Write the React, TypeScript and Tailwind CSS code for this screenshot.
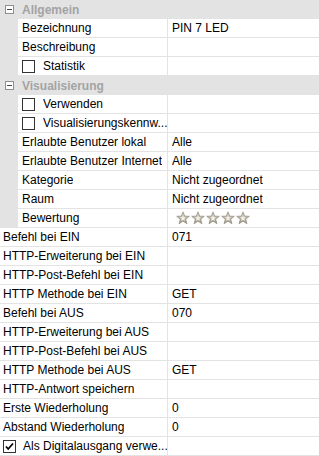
import React from "react";

type Row =
  | { kind: "header"; label: string }
  | { kind: "item"; label: string; value?: string; nested?: boolean; check?: boolean; checked?: boolean; stars?: boolean };

const rows: Row[] = [
  { kind: "header", label: "Allgemein" },
  { kind: "item", nested: true, label: "Bezeichnung", value: "PIN 7 LED" },
  { kind: "item", nested: true, label: "Beschreibung" },
  { kind: "item", nested: true, label: "Statistik", check: true },
  { kind: "header", label: "Visualisierung" },
  { kind: "item", nested: true, label: "Verwenden", check: true },
  { kind: "item", nested: true, label: "Visualisierungskennw...", check: true },
  { kind: "item", nested: true, label: "Erlaubte Benutzer lokal", value: "Alle" },
  { kind: "item", nested: true, label: "Erlaubte Benutzer Internet", value: "Alle" },
  { kind: "item", nested: true, label: "Kategorie", value: "Nicht zugeordnet" },
  { kind: "item", nested: true, label: "Raum", value: "Nicht zugeordnet" },
  { kind: "item", nested: true, label: "Bewertung", stars: true },
  { kind: "item", label: "Befehl bei EIN", value: "071" },
  { kind: "item", label: "HTTP-Erweiterung bei EIN" },
  { kind: "item", label: "HTTP-Post-Befehl bei EIN" },
  { kind: "item", label: "HTTP Methode bei EIN", value: "GET" },
  { kind: "item", label: "Befehl bei AUS", value: "070" },
  { kind: "item", label: "HTTP-Erweiterung bei AUS" },
  { kind: "item", label: "HTTP-Post-Befehl bei AUS" },
  { kind: "item", label: "HTTP Methode bei AUS", value: "GET" },
  { kind: "item", label: "HTTP-Antwort speichern" },
  { kind: "item", label: "Erste Wiederholung", value: "0" },
  { kind: "item", label: "Abstand Wiederholung", value: "0" },
  { kind: "item", label: "Als Digitalausgang verwe...", check: true, checked: true },
];

function MinusBox() {
  return (
    <svg width="9" height="9" viewBox="0 0 9 9" className="block">
      <rect x="0.5" y="0.5" width="8" height="8" fill="#fff" stroke="#8e8f8f" />
      <line x1="2" y1="4.5" x2="7" y2="4.5" stroke="#4a4a4a" />
    </svg>
  );
}

function Check({ checked }: { checked?: boolean }) {
  return (
    <svg width="13" height="13" viewBox="0 0 13 13" className="block shrink-0">
      <rect x="0.5" y="0.5" width="12" height="12" fill="#fff" stroke="#333" />
      {checked && (
        <path d="M3 6.5 L5.2 9 L10 3.5" fill="none" stroke="#000" strokeWidth="1.8" />
      )}
    </svg>
  );
}

function Star() {
  return (
    <svg width="14" height="14" viewBox="0 0 24 23" className="block">
      <defs>
        <linearGradient id="sg" x1="0" y1="0" x2="0" y2="1">
          <stop offset="0" stopColor="#d8d3c7" />
          <stop offset="1" stopColor="#a39c8a" />
        </linearGradient>
      </defs>
      <path
        d="M12 1 L14.9 8.3 L22.8 8.6 L16.6 13.6 L18.8 21.3 L12 16.9 L5.2 21.3 L7.4 13.6 L1.2 8.6 L9.1 8.3 Z"
        fill="url(#sg)"
        stroke="#8f8878"
        strokeWidth="1.2"
      />
      <path
        d="M12 6.5 L13.4 10.2 L17.2 10.4 L14.2 12.8 L15.3 16.5 L12 14.4 L8.7 16.5 L9.8 12.8 L6.8 10.4 L10.6 10.2 Z"
        fill="#f4f2ec"
      />
    </svg>
  );
}

export default function App() {
  return (
    <div
      className="w-[319px] h-[456px] bg-white overflow-hidden text-[12px] text-black"
      style={{ fontFamily: '"Liberation Sans", Arial, sans-serif' }}
    >
      {rows.map((r, i) => {
        if (r.kind === "header") {
          return (
            <div key={i} className="h-[19px] bg-[#e3e3e3] flex items-center">
              <div className="w-[18px] flex justify-center">
                <MinusBox />
              </div>
              <span className="pl-[4px] font-bold text-[#a3a3a3] leading-[18px]">{r.label}</span>
            </div>
          );
        }
        return (
          <div key={i} className={"h-[19px] flex " + (r.nested ? "bg-[#e3e3e3]" : "")}>
            {r.nested && <div className="w-[18px] shrink-0" />}
            <div className="flex flex-1 min-w-0 bg-white border-b border-[#e3e3e3]">
              <div
                className={
                  "flex items-center min-w-0 border-r border-[#e3e3e3] " +
                  (r.nested ? "w-[150px] pl-[4px]" : "w-[168px] pl-[3px]")
                }
              >
                {r.check && (
                  <div className={r.nested ? "mr-[8px]" : "mr-[7px]"}>
                    <Check checked={r.checked} />
                  </div>
                )}
                <span className="whitespace-nowrap overflow-hidden leading-[18px]">{r.label}</span>
              </div>
              <div className="flex-1 flex items-center pl-[4px] min-w-0">
                {r.stars ? (
                  <div className="flex gap-[1px] pl-[4px]">
                    <Star />
                    <Star />
                    <Star />
                    <Star />
                    <Star />
                  </div>
                ) : (
                  <span className="truncate leading-[18px]">{r.value}</span>
                )}
              </div>
            </div>
          </div>
        );
      })}
    </div>
  );
}
